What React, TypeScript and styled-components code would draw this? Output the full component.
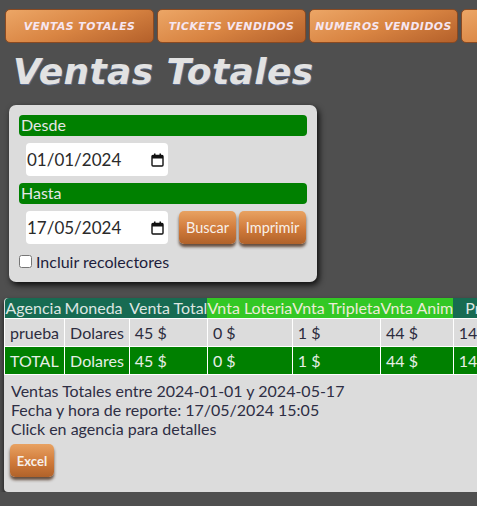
import React from "react";
import styled, { createGlobalStyle } from "styled-components";

const GlobalStyle = createGlobalStyle`
  html, body {
    margin: 0;
    padding: 0;
    background: #4f4f4f;
    overflow: hidden;
  }
  body {
    font-family: Lato, "Open Sans", sans-serif;
  }
`;

const Page = styled.div`
  padding: 9px 0 0 5px;
  width: 700px;
`;

const NavBar = styled.nav`
  display: flex;
  gap: 3px;
`;

const NavButton = styled.button`
  flex: none;
  width: 149px;
  height: 34px;
  border: 1px solid #8a4a22;
  border-radius: 5px;
  background: linear-gradient(160deg, #eca666 0%, #d98543 50%, #b4602a 100%);
  color: #f6e6f1;
  font-family: "DejaVu Sans", Verdana, sans-serif;
  font-weight: bold;
  font-style: italic;
  font-size: 10.8px;
  letter-spacing: 0.5px;
  text-transform: uppercase;
  padding: 0;
  cursor: pointer;
`;

const Title = styled.h1`
  margin: 8px 0 0 8px;
  font-family: "DejaVu Sans", Verdana, sans-serif;
  font-weight: bold;
  font-style: italic;
  font-size: 36px;
  line-height: 42px;
  letter-spacing: 0.4px;
  color: #e2e2e2;
  text-shadow: 1px 1px 0 #5a6a8a;
`;

const FilterPanel = styled.section`
  margin: 12px 0 0 4px;
  width: 288px;
  padding: 10px 10px 11px 10px;
  background: #dcdcdc;
  border-radius: 7px;
  box-shadow: 2px 3px 6px rgba(0, 0, 0, 0.85);
  display: flex;
  flex-direction: column;
  gap: 7px;
`;

const FieldLabel = styled.div`
  background: #008000;
  color: #e6e6e6;
  border-radius: 4px;
  height: 21px;
  line-height: 20px;
  font-size: 16px;
  padding-left: 2px;
`;

const FieldRow = styled.div`
  display: flex;
  align-items: flex-start;
  padding-left: 7px;
  gap: 3px;
`;

const DateBox = styled.div`
  width: 142px;
  height: 33px;
  box-sizing: border-box;
  background: #fff;
  border-radius: 4px;
  display: flex;
  align-items: center;
  justify-content: space-between;
  padding: 0 4px 0 1px;
  margin-right: 8px;
  color: #2a2a2a;
  font-size: 17px;
`;

const ActionButton = styled.button<{ $w: number }>`
  width: ${(p) => p.$w}px;
  height: 33px;
  border: none;
  border-radius: 5px;
  background: linear-gradient(180deg, #e8a262 0%, #d07a3a 55%, #b0622a 100%);
  color: #f7f0ea;
  font-family: Lato, sans-serif;
  font-size: 14.5px;
  padding: 0;
  box-shadow: 0 3px 3px rgba(60, 30, 10, 0.75);
  cursor: pointer;
`;

const CheckRow = styled.label`
  display: flex;
  align-items: center;
  gap: 4px;
  font-size: 16px;
  color: #1e1e3c;
  margin-top: 1px;

  input {
    margin: 0;
    width: 13px;
    height: 13px;
  }
`;

const ReportCard = styled.section`
  margin: 16px 0 0 -1px;
  width: 640px;
  background: #dcdcdc;
  border-radius: 4px;
  box-shadow: 0 3px 5px rgba(0, 0, 0, 0.7);
  padding-bottom: 15px;
`;

const Table = styled.table`
  border-collapse: collapse;
  font-size: 16px;
`;

const HeadCell = styled.th<{ $lime?: boolean; $indent?: number }>`
  background: ${(p) => (p.$lime ? "#33c825" : "#176b52")};
  color: ${(p) => (p.$lime ? "#ececd8" : "#dde6e2")};
  font-weight: normal;
  text-align: left;
  padding: 0 0 0 ${(p) => p.$indent ?? 0}px;
  height: 20px;
  line-height: 20px;
  white-space: nowrap;

  &:first-child {
    border-top-left-radius: 4px;
  }
`;

const Cell = styled.td<{ $total?: boolean }>`
  background: ${(p) => (p.$total ? "#008000" : "#dcdcdc")};
  color: ${(p) => (p.$total ? "#e6eee6" : "#2c2c3e")};
  border: 1px solid #ffffff;
  padding: 0 5px;
  height: 27px;
  white-space: nowrap;
`;

const Notes = styled.div`
  padding: 6px 0 0 7px;
  color: #2e2e44;
  font-size: 16px;
  line-height: 19px;
`;

const ExcelButton = styled(ActionButton)`
  display: block;
  margin: 6px 0 0 6px;
  font-weight: bold;
  font-size: 13px;
`;

const CalendarIcon = () => (
  <svg width="13" height="14" viewBox="0 0 13 14">
    <rect x="1" y="2.5" width="11" height="10.5" rx="1" fill="none" stroke="#111" strokeWidth="1.4" />
    <rect x="1" y="2.5" width="11" height="3" fill="#111" />
    <rect x="3" y="0.5" width="1.5" height="3" fill="#111" />
    <rect x="8.5" y="0.5" width="1.5" height="3" fill="#111" />
  </svg>
);

const columns = [
  { name: "Agencia", lime: false, indent: 1 },
  { name: "Moneda", lime: false, indent: 0 },
  { name: "Venta Total", lime: false, indent: 0 },
  { name: "Vnta Loteria", lime: true, indent: 0 },
  { name: "Vnta Tripleta", lime: true, indent: 0 },
  { name: "Vnta Anim", lime: true, indent: 0 },
  { name: "Premios", lime: false, indent: 12 },
  { name: "Comision", lime: false, indent: 6 },
];

const rows = [
  { total: false, values: ["prueba", "Dolares", "45 $", "0 $", "1 $", "44 $", "14 $", "5 $"] },
  { total: true, values: ["TOTAL", "Dolares", "45 $", "0 $", "1 $", "44 $", "14 $", "5 $"] },
];

export default function App() {
  return (
    <>
      <GlobalStyle />
      <Page>
        <NavBar>
          <NavButton>Ventas Totales</NavButton>
          <NavButton>Tickets Vendidos</NavButton>
          <NavButton>Numeros Vendidos</NavButton>
          <NavButton>Premios</NavButton>
        </NavBar>

        <Title>Ventas Totales</Title>

        <FilterPanel>
          <FieldLabel>Desde</FieldLabel>
          <FieldRow>
            <DateBox>
              01/01/2024
              <CalendarIcon />
            </DateBox>
          </FieldRow>
          <FieldLabel>Hasta</FieldLabel>
          <FieldRow>
            <DateBox>
              17/05/2024
              <CalendarIcon />
            </DateBox>
            <ActionButton $w={57}>Buscar</ActionButton>
            <ActionButton $w={67}>Imprimir</ActionButton>
          </FieldRow>
          <CheckRow>
            <input type="checkbox" />
            Incluir recolectores
          </CheckRow>
        </FilterPanel>

        <ReportCard>
          <Table>
            <thead>
              <tr>
                {columns.map((c) => (
                  <HeadCell key={c.name} $lime={c.lime} $indent={c.indent}>
                    {c.name}
                  </HeadCell>
                ))}
              </tr>
            </thead>
            <tbody>
              {rows.map((r) => (
                <tr key={r.values[0]}>
                  {r.values.map((v, i) => (
                    <Cell key={i} $total={r.total}>
                      {v}
                    </Cell>
                  ))}
                </tr>
              ))}
            </tbody>
          </Table>
          <Notes>
            Ventas Totales entre 2024-01-01 y 2024-05-17
            <br />
            Fecha y hora de reporte: 17/05/2024 15:05
            <br />
            Click en agencia para detalles
          </Notes>
          <ExcelButton $w={44}>Excel</ExcelButton>
        </ReportCard>
      </Page>
    </>
  );
}
